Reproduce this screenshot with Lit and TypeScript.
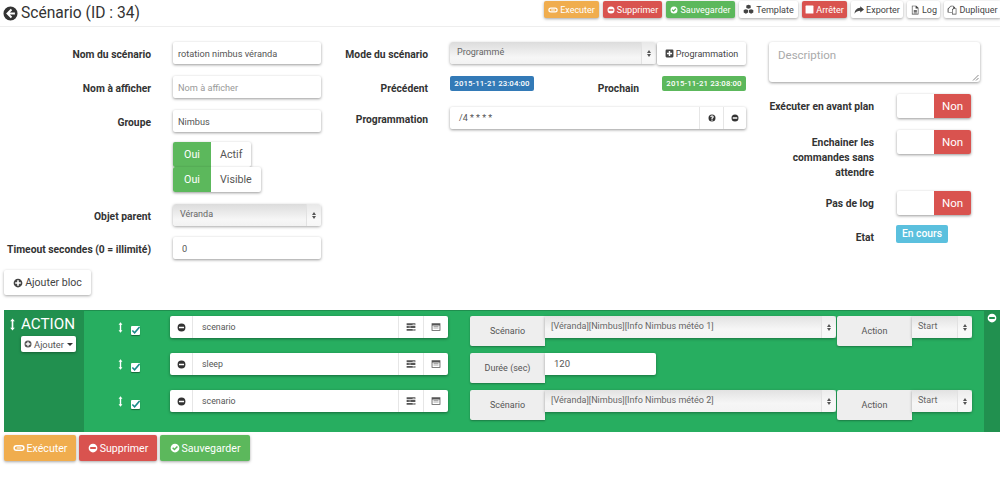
import { LitElement, html, css, svg } from "lit";
import { customElement } from "lit/decorators.js";

const I = (d: any, size = 11, cls = "") => html`<svg class="ic ${cls}" width=${size} height=${size} viewBox="0 0 16 16" fill="currentColor">${d}</svg>`;
const minusC = svg`<path fill-rule="evenodd" d="M8 1a7 7 0 1 0 0 14A7 7 0 0 0 8 1zM3.5 6.5h9v3h-9z"/>`;
const plusC = svg`<path fill-rule="evenodd" d="M8 1a7 7 0 1 0 0 14A7 7 0 0 0 8 1zM6.7 3.5h2.6v3.2h3.2v2.6H9.3v3.2H6.7V9.3H3.5V6.7h3.2z"/>`;
const okC = svg`<path fill-rule="evenodd" d="M8 1a7 7 0 1 0 0 14A7 7 0 0 0 8 1zm-.9 11L3.4 8.3l1.7-1.7 2 2 3.9-3.9 1.7 1.7z"/>`;
const qC = svg`<path fill-rule="evenodd" d="M8 1a7 7 0 1 0 0 14A7 7 0 0 0 8 1zm-1.2 10.2h2.4v2.2H6.8zM8 3.2c2 0 3.4 1 3.4 2.8 0 1.2-.7 1.8-1.4 2.3-.6.4-.8.7-.8 1.5H6.8c0-1.4.4-2 1.2-2.6.6-.4 1-.7 1-1.2S8.600 5.200 8 5.200c-.7 0-1.100.4-1.200 1.100L4.600 6C4.800 4.200 6.100 3.200 8 3.200z"/>`;
const back = svg`<path fill-rule="evenodd" d="M8 .5a7.500 7.500 0 1 0 0 15 7.500 7.500 0 0 0 0-15zM8.300 3 3.300 8l5 5 1.500-1.500L7.300 9.100h5.400V6.900H7.300l2.500-2.400z"/>`;
const link = svg`<path fill-rule="evenodd" d="M4.500 4h7a4 4 0 0 1 0 8h-7a4 4 0 0 1 0-8zm0 2a2 2 0 0 0 0 4h2.700a2 2 0 0 0 1.600 0h2.700a2 2 0 0 0 0-4zM5 7.200h6v1.600H5z"/>`;
const cubes = svg`<path d="M8 1l3.200 1.300v3.400L8 7 4.800 5.700V2.300zM4.200 7.500l3.200 1.300v3.700L4.200 14 1 12.500V8.800zM11.800 7.500L15 8.800v3.700L11.800 14l-3.200-1.500V8.800z"/>`;
const share = svg`<path d="M10 2l6 5-6 5V9C6 9 3 10 1 14c0-5 3-9 9-9.500z"/>`;
const file = svg`<path fill-rule="evenodd" d="M3 1h7l3.500 3.500V15H3zm1 1v12h8.500V5.500H9V2zm2 6h5v1H6zm0 2h5v1H6zm0 2h5v1H6z"/>`;
const copy = svg`<path fill-rule="evenodd" d="M6 1h4l3 3v1h2v10H8v-3H1V6zm0 1.500L2.500 6.500V11H8V7l2-2V2zM11 6 9 8v6h5V6z"/>`;
const stopS = svg`<rect x="1" y="1" width="14" height="14" rx="1"/>`;
const plusS = svg`<path fill-rule="evenodd" d="M3 1h10a2 2 0 0 1 2 2v10a2 2 0 0 1-2 2H3a2 2 0 0 1-2-2V3a2 2 0 0 1 2-2zm3.700 2.500v3.200H3.500v2.600h3.200v3.200h2.600V9.300h3.200V6.700H9.300V3.500z"/>`;
const tasks = svg`<path fill-rule="evenodd" d="M1 2h14v3H1zm9.500 1v1H14V3zM1 6.500h14v3H1zm3 1v1h4v-1zM1 11h14v3H1zm9.500 1v1H14v-1z"/>`;
const win = svg`<path fill-rule="evenodd" d="M1 2h14v12H1zm1.300 3.500v7.200h11.400V5.500zM4 7h8v1H4zm0 2h8v1H4z"/>`;
const updown = svg`<path d="M8 .5 10.800 4H9v8h1.800L8 15.500 5.200 12H7V4H5.200z"/>`;

@customElement("app-root")
export class AppRoot extends LitElement {
  static styles = css`
    :host { display: block; width: 1000px; height: 477px; overflow: hidden; background: #fff; font-family: Roboto, "Liberation Sans", sans-serif; color: #555; font-size: 11px; }
    * { box-sizing: border-box; }
    .ic { flex: none; display: block; }
    header { height: 27px; display: flex; align-items: flex-start; justify-content: space-between; padding-left: 3px; border-bottom: 1px solid #eee; }
    h1 { margin: 3px 0 0; font-size: 15.600px; font-weight: 400; line-height: 20px; color: #333; display: flex; align-items: center; gap: 3px; white-space: nowrap; }
    h1 .ic { color: #333; }
    .tools { display: flex; gap: 4px; margin-top: 1px; margin-right: -1px; }
    .btn { display: inline-flex; align-items: center; justify-content: center; gap: 2px; border-radius: 2px; box-shadow: 0 1px 3px rgba(0,0,0,.35); white-space: nowrap; color: #444; background: #fff; font-size: 9px; height: 17px; padding: 0 3px; }
    .orange { background: #f0ad4e; color: #fff; }
    .red { background: #d9534f; color: #fff; }
    .green { background: #5cb85c; color: #fff; }
    .form { display: flex; height: 243px; padding-top: 15px; }
    .col1 { width: 321px; display: grid; grid-template-rows: 34px 34px 32px 25px 37px 33px; grid-template-columns: 151px 148px; column-gap: 22px; }
    .lab { font-weight: 700; color: #333; font-size: 10.300px; text-align: right; line-height: 25px; white-space: nowrap; }
    .input { height: 22px; background: #fff; border-radius: 2px; box-shadow: 0 1px 3px rgba(0,0,0,.4); padding: 0 5px; line-height: 23px; font-size: 9.200px; color: #555; white-space: nowrap; overflow: hidden; }
    .ph { color: #999; }
    .sel { height: 22px; border-radius: 3px; box-shadow: 0 1px 3px rgba(0,0,0,.35); background: linear-gradient(#dcdcdc, #f6f6f6 70%, #f2f2f2); display: flex; justify-content: space-between; line-height: 21px; padding-left: 7px; font-size: 9px; color: #666; white-space: nowrap; }
    .arrows { width: 15px; flex: none; border-left: 1px solid #e2e2e2; background: rgba(255,255,255,.35); display: flex; flex-direction: column; align-items: center; justify-content: center; gap: 1px; }
    .arrows i { display: block; width: 0; height: 0; border-left: 2.500px solid transparent; border-right: 2.500px solid transparent; }
    .arrows i:first-child { border-bottom: 3px solid #555; }
    .arrows i:last-child { border-top: 3px solid #555; }
    .tog { display: inline-flex; height: 25px; border-radius: 2px; box-shadow: 0 1px 3px rgba(0,0,0,.4); background: #fff; width: max-content; font-size: 10.700px; line-height: 26px; color: #555; }
    .tog b { font-weight: 400; background: #5cb85c; color: #fff; width: 38px; text-align: center; border-radius: 2px 0 0 2px; }
    .tog span { padding: 0 9px; }
    .col2 { margin-left: 7px; width: 418px; display: grid; grid-template-rows: 34px 31px 34px; grid-template-columns: 100px 296px; column-gap: 22px; align-content: start; }
    .modeline { display: flex; gap: 1px; }
    .modeline .sel { width: 206px; }
    .modeline .btn { width: 89px; height: 23px; font-size: 9px; color: #444; }
    .dates { display: flex; align-items: flex-start; }
    .lab.p2 { line-height: 25px; margin-left: auto; margin-right: 23px; }
    .badge { height: 15px; font-size: 7.800px; font-weight: 500; line-height: 15px; color: #fff; padding: 0 4px; border-radius: 2px; white-space: nowrap; letter-spacing: .1px; width: 84px; text-align: center; }
    .blue { background: #337ab7; }
    .bgreen { background: #5cb85c; }
    .lab.up { line-height: 25px; }
    .igroup { height: 22px; display: flex; background: #fff; border-radius: 2px; box-shadow: 0 1px 3px rgba(0,0,0,.4); line-height: 23px; font-size: 9px; color: #555; }
    .igroup .txt { flex: 1; padding: 0 9px; min-width: 0; }
    .add { width: 23px; flex: none; display: flex; align-items: center; justify-content: center; color: #333; border-left: 1px solid #e6e6e6; }
    .col3 { margin-left: 23px; width: 231px; }
    .ta { position: relative; width: 211px; height: 40px; border-radius: 3px; box-shadow: 0 1px 3px rgba(0,0,0,.4); padding: 5px 9px; font-size: 11.500px; color: #aaa; line-height: 16px; margin-bottom: 12px; }
    .grip { position: absolute; right: 1px; bottom: 1px; }
    .opt { display: flex; gap: 23px; }
    .opt .lab { width: 105px; white-space: normal; line-height: 15px; padding-top: 5px; letter-spacing: 0; }
    .sw { width: 74px; height: 24px; flex: none; display: flex; justify-content: flex-end; background: #fff; border-radius: 2px; box-shadow: 0 1px 3px rgba(0,0,0,.4); }
    .sw span { width: 37px; background: #d9534f; color: #fff; text-align: center; line-height: 24px; border-radius: 0 2px 2px 0; font-size: 11.500px; }
    .en { display: block; background: #5bc0de; color: #fff; height: 18px; width: 52px; border-radius: 2px; font-size: 10.300px; font-weight: 500; text-align: center; line-height: 18px; margin-left: -1px; }
    .addbar { padding-left: 4px; height: 40px; }
    .addbar .btn { height: 25px; width: 87px; font-size: 10.600px; color: #444; }
    .block { margin-left: 4px; height: 122px; background: #27ae60; border-top: 1px solid #1f8e4e; display: flex; }
    .bl { width: 80px; background: #21904f; padding-top: 4px; position: relative; flex: none; }
    .bl .ttl { display: flex; align-items: center; gap: 2px; color: #fff; font-size: 15.200px; line-height: 19px; padding-left: 2px; }
    .bl .btn { margin: 2px 0 0 17px; width: 55px; height: 16px; font-size: 9.300px; gap: 2px; color: #555; }
    .caret { width: 0; height: 0; border-left: 3px solid transparent; border-right: 3px solid transparent; border-top: 3px solid #333; margin-left: 1px; }
    .bm { flex: 1; padding-top: 5px; display: grid; grid-auto-rows: 37px; }
    .row { display: flex; align-items: flex-start; }
    .drag { width: 14px; margin-left: 31px; padding-top: 6px; color: #fff; }
    .cb { width: 9px; height: 9px; margin-top: 10px; margin-left: 2px; background: #fff; border-radius: 1px; box-shadow: 0 1px 1px rgba(0,0,0,.4); display: block; overflow: visible; }
    .drag + .cb { margin-right: 30px; }
    .grp { width: 278px; margin-right: 22px; flex: none; }
    .grp .add { width: 25px; color: #555; }
    .grp .add:first-child { width: 23px; border-left: 0; border-right: 1px solid #e6e6e6; color: #333; }
    .grp .txt { font-size: 8.800px; padding: 0 9px; }
    .lbl { width: 75px; height: 30px; background: #eee; box-shadow: 0 1px 2px rgba(0,0,0,.3); text-align: center; font-size: 9px; line-height: 31px; color: #555; flex: none; border-radius: 2px 0 0 2px; }
    .val { height: 22px; width: 111px; background: #fff; border-radius: 0 2px 2px 0; box-shadow: 0 1px 3px rgba(0,0,0,.35); padding-left: 9px; font-size: 9.500px; line-height: 22px; }
    .row .sel { background: linear-gradient(#e2e2e2, #f6f6f6 60%, #f3f3f3); border-radius: 0 3px 3px 0; line-height: 20px; font-size: 9px; padding-left: 6px; }
    .s1 { width: 291px; margin-right: 1px; flex: none; }
    .s2 { width: 60px; flex: none; }
    .bs { width: 16px; flex: none; background: #21904f; color: #fff; display: flex; justify-content: center; padding-top: 2px; }
    .bottom { padding: 3px 0 0 4px; display: flex; gap: 3px; }
    .bottom .btn { height: 26px; font-size: 10.600px; gap: 2px; }
  `;

  private arrows() { return html`<span class="arrows"><i></i><i></i></span>`; }

  private actionRow(name: string, right: unknown) {
    return html`<div class="row">
      <span class="drag">${I(updown, 11)}</span>
      <svg class="cb" viewBox="0 0 10 10"><path d="M1.500 5l2.500 2.500L9.500 1" fill="none" stroke="#1a8a8a" stroke-width="1.800"/></svg>
      <div class="igroup grp">
        <span class="add">${I(minusC, 9)}</span>
        <span class="txt">${name}</span>
        <span class="add">${I(tasks, 10)}</span>
        <span class="add">${I(win, 10)}</span>
      </div>
      ${right}
    </div>`;
  }

  private scen(t: string) {
    return html`<span class="lbl">Scénario</span>
      <div class="sel s1"><span>${t}</span>${this.arrows()}</div>
      <span class="lbl">Action</span>
      <div class="sel s2"><span>Start</span>${this.arrows()}</div>`;
  }

  render() {
    return html`
      <header>
        <h1>${I(back, 15)}Scénario (ID : 34)</h1>
        <div class="tools">
          <span class="btn orange" style="width:55px">${I(link, 10)}Executer</span>
          <span class="btn red" style="width:59px">${I(minusC, 8)}Supprimer</span>
          <span class="btn green" style="width:69px">${I(okC, 8)}Sauvegarder</span>
          <span class="btn" style="width:59px">${I(cubes, 11)}Template</span>
          <span class="btn red" style="width:45px">${I(stopS, 9)}Arrêter</span>
          <span class="btn" style="width:52px">${I(share, 10)}Exporter</span>
          <span class="btn" style="width:33px">${I(file, 10)}Log</span>
          <span class="btn" style="width:57px">${I(copy, 10)}Dupliquer</span>
        </div>
      </header>
      <section class="form">
        <div class="col1">
          <div class="lab">Nom du scénario</div><div class="input">rotation nimbus véranda</div>
          <div class="lab">Nom à afficher</div><div class="input ph">Nom à afficher</div>
          <div class="lab">Groupe</div><div class="input">Nimbus</div>
          <div></div><div class="tog"><b>Oui</b><span>Actif</span></div>
          <div></div><div class="tog"><b>Oui</b><span>Visible</span></div>
          <div class="lab">Objet parent</div><div class="sel"><span>Véranda</span>${this.arrows()}</div>
          <div class="lab">Timeout secondes (0 = illimité)</div><div class="input" style="padding-left:9px">0</div>
        </div>
        <div class="col2">
          <div class="lab">Mode du scénario</div>
          <div class="modeline"><div class="sel"><span>Programmé</span>${this.arrows()}</div><span class="btn">${I(plusS, 9)}Programmation</span></div>
          <div class="lab up">Précédent</div>
          <div class="dates"><span class="badge blue">2015-11-21 23:04:00</span><span class="lab p2">Prochain</span><span class="badge bgreen">2015-11-21 23:08:00</span></div>
          <div class="lab">Programmation</div>
          <div class="igroup"><span class="txt">/4 * * * *</span><span class="add" style="width:24px">${I(qC, 8)}</span><span class="add">${I(minusC, 8)}</span></div>
        </div>
        <div class="col3">
          <div class="ta">Description<svg class="grip" width="7" height="7" viewBox="0 0 7 7"><path d="M1 6.500 6.500 1M4 6.500 6.500 4" stroke="#888" fill="none"/></svg></div>
          <div class="opt" style="height:36px"><div class="lab">Exécuter en avant plan</div><div class="sw"><span>Non</span></div></div>
          <div class="opt" style="height:61px"><div class="lab">Enchainer les commandes sans attendre</div><div class="sw"><span>Non</span></div></div>
          <div class="opt" style="height:34px"><div class="lab">Pas de log</div><div class="sw"><span>Non</span></div></div>
          <div class="opt"><div class="lab">Etat</div><span class="en">En cours</span></div>
        </div>
      </section>
      <div class="addbar"><span class="btn">${I(plusC, 10)}Ajouter bloc</span></div>
      <section class="block">
        <div class="bl">
          <div class="ttl">${I(updown, 13)}ACTION</div>
          <span class="btn">${I(plusC, 8)}Ajouter<span class="caret"></span></span>
        </div>
        <div class="bm">
          ${this.actionRow("scenario", this.scen("[Véranda][Nimbus][Info Nimbus météo 1]"))}
          ${this.actionRow("sleep", html`<span class="lbl">Durée (sec)</span><div class="val">120</div>`)}
          ${this.actionRow("scenario", this.scen("[Véranda][Nimbus][Info Nimbus météo 2]"))}
        </div>
        <div class="bs">${I(minusC, 10)}</div>
      </section>
      <div class="bottom">
        <span class="btn orange" style="width:72px">${I(link, 12)}Exécuter</span>
        <span class="btn red" style="width:78px">${I(minusC, 10)}Supprimer</span>
        <span class="btn green" style="width:90px">${I(okC, 10)}Sauvegarder</span>
      </div>
    `;
  }
}
